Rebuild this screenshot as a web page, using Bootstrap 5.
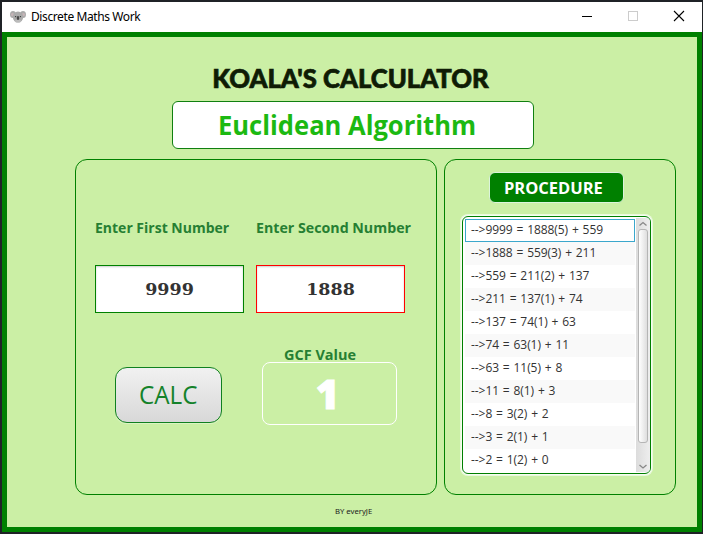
<!DOCTYPE html>
<html lang="en">
<head>
<meta charset="utf-8">
<title>Discrete Maths Work</title>
<link rel="stylesheet" href="https://cdn.jsdelivr.net/npm/bootstrap@5.3.0/dist/css/bootstrap.min.css">
<style>
html,body{height:100%}
body{background:#1f2226;font-family:"Open Sans","Noto Sans",sans-serif;padding:2px 1px 2px 2px;overflow:hidden;line-height:1}
.window{height:530px;width:700px}
.titlebar{height:30px;background:#fff;color:#000;font-size:12px;padding-left:8px}
.titlebar .caption{font-family:"Noto Sans",sans-serif;letter-spacing:-.4px;margin-left:5px}
.win-btn{width:46px;height:30px;padding:0}
.app{height:500px;background:#cbefa5;border:5px solid #008000}
.app-title{height:64px;padding-top:25px;font:900 27px/32px Lato,sans-serif;color:#0f1c05}
.fit{display:inline-block;white-space:nowrap;transform-origin:0 50%}
.app-title .fit{transform:scaleX(.95);transform-origin:50% 50%;-webkit-text-stroke:.7px #0f1c05;margin-left:-2px}
.banner{width:362px;height:48px;margin-left:165px;padding-left:45px;background:#fff;border:1px solid #108010;border-radius:6px;font-size:26px;font-weight:700;color:#1cb912}
.banner .fit{transform:scaleX(.983)}
.panels{margin:10px 0 0 68px;gap:7px}
.panel{height:336px;border:1px solid #008000;border-radius:12px}
.panel-form{width:362px;padding:57px 0 0 19px}
.panel-steps{width:232px;padding:12px 0 0 16px}
.fields{gap:12px}
.field{width:149px}
.field label{height:22px;line-height:20px;font-size:15px;font-weight:700;color:#267f33;white-space:nowrap;transform:scaleX(.933);transform-origin:0 50%}
.field label.wide{transform:scaleX(.947)}
.field .num{height:48px;margin-top:26px;padding:0;border:1px solid #008000;border-radius:0;color:#333;box-shadow:inset 0 1px 2px #ccc;font:700 17.5px "DejaVu Serif",serif;text-align:center}
.field .num.invalid{border-color:#f00}
.result-row{margin:31px 0 0 20px;gap:40px}
.calc{width:107px;height:56px;margin-top:23px;border:1px solid #108020;border-radius:12px;background:linear-gradient(#f1f1f1,#d8d8d8);box-shadow:0 1px 0 #dcf4c4;color:#14822a;font-size:25px;padding:0}
.calc .fit{transform:scaleX(.97);transform-origin:50% 50%}
.gcf label{height:18px;padding-left:22px;line-height:20px;font-size:15px;font-weight:700;color:#267f33;display:block}
.gcf label .fit{transform:scaleX(.965)}
.gcf-box{width:135px;height:63px;border:1px solid #fff;border-radius:8px;color:#fff;font:700 40px/1 "Liberation Sans",sans-serif}
.gcf-box .one{font-family:"Open Sans",sans-serif;font-weight:800;-webkit-text-stroke:1px #fff;margin-left:-4px}
.proc{width:135px;height:31px;margin-left:28px;background:#008000;border:1px solid #dcf4dc;border-radius:6px;color:#fff;font-size:16px;font-weight:700;padding-left:14px}
.proc .fit{transform:scaleX(1.03)}
.steps{width:191px;height:260px;margin-top:12px;background:#fff;border:1px solid #f6fdf0;border-radius:7px;box-shadow:0 0 0 1px #e9f9dc}
.steps-in{height:258px;border:1px solid #008000;border-radius:6px;padding:2px;overflow:hidden}
.rows{width:170px}
.rows .list-group-item{height:23px;flex:none;border:0;border-radius:0;padding:0 0 0 6px;line-height:21px;font-size:12px;color:#333;white-space:nowrap;background:#fff;letter-spacing:-.06px;word-spacing:.8px}
.rows .list-group-item:nth-child(even){background:#f9f9f9}
.rows .list-group-item.focus-row{border:1px solid #3ba7cc;padding-left:5px;line-height:19px}
.scroll{width:14px;margin:-1px -1px -1px 1px;background:linear-gradient(90deg,#dcdcdc,#eee)}
.thumb{width:10px;height:214px;border:1px solid #b5b5b5;border-radius:3px;background:linear-gradient(90deg,#fff,#dedede)}
.footer-text{font-size:7.7px;color:#222;margin:13px 0 0 328px;font-family:"Noto Sans",sans-serif}
</style>
<script src="https://cdn.jsdelivr.net/npm/bootstrap@5.3.0/dist/js/bootstrap.bundle.min.js"></script>
</head>
<body>
<div class="window">
  <header class="titlebar d-flex align-items-center">
    <svg width="16" height="16" viewBox="0 0 16 16"><ellipse cx="3" cy="5.5" rx="3" ry="3.6" fill="#aaa"/><ellipse cx="13" cy="5.5" rx="3" ry="3.6" fill="#aaa"/><circle cx="2.6" cy="5.5" r="1.6" fill="#c7b5b8"/><circle cx="13.4" cy="5.5" r="1.6" fill="#c7b5b8"/><ellipse cx="8" cy="8" rx="5.2" ry="5.6" fill="#aaa"/><ellipse cx="8" cy="12" rx="3" ry="1.5" fill="#bbb"/><circle cx="5.6" cy="7.6" r=".7" fill="#333"/><circle cx="10.4" cy="7.6" r=".7" fill="#333"/><ellipse cx="8" cy="9" rx="1.3" ry="2.1" fill="#484848"/></svg>
    <span class="caption">Discrete Maths Work</span>
    <div class="d-flex ms-auto">
      <span class="win-btn"><svg width="46" height="30"><path d="M18 14.5h10" stroke="#000"/></svg></span>
      <span class="win-btn"><svg width="46" height="30"><rect x="18.5" y="9.5" width="9" height="9" fill="none" stroke="#ccc"/></svg></span>
      <span class="win-btn"><svg width="46" height="30"><path d="M18 9l10 10M28 9l-10 10" stroke="#000" stroke-width="1.1"/></svg></span>
    </div>
  </header>
  <main class="app">
    <h1 class="app-title text-center m-0"><span class="fit">KOALA'S CALCULATOR</span></h1>
    <div class="banner d-flex align-items-center"><span class="fit">Euclidean Algorithm</span></div>
    <div class="panels d-flex">
      <section class="panel panel-form">
        <div class="fields d-flex">
          <div class="field"><label for="n1">Enter First Number</label><input id="n1" class="num form-control" value="9999"></div>
          <div class="field"><label for="n2" class="wide">Enter Second Number</label><input id="n2" class="num invalid form-control" value="1888"></div>
        </div>
        <div class="result-row d-flex">
          <button class="calc btn" type="button"><span class="fit">CALC</span></button>
          <div class="gcf"><label><span class="fit">GCF Value</span></label><div class="gcf-box d-flex align-items-center justify-content-center"><span class="one">1</span></div></div>
        </div>
      </section>
      <section class="panel panel-steps">
        <div class="proc d-flex align-items-center"><span class="fit">PROCEDURE</span></div>
        <div class="steps"><div class="steps-in d-flex">
          <ul class="rows list-group flex-shrink-0">
            <li class="list-group-item focus-row">--&gt;9999 = 1888(5) + 559</li>
            <li class="list-group-item">--&gt;1888 = 559(3) + 211</li>
            <li class="list-group-item">--&gt;559 = 211(2) + 137</li>
            <li class="list-group-item">--&gt;211 = 137(1) + 74</li>
            <li class="list-group-item">--&gt;137 = 74(1) + 63</li>
            <li class="list-group-item">--&gt;74 = 63(1) + 11</li>
            <li class="list-group-item">--&gt;63 = 11(5) + 8</li>
            <li class="list-group-item">--&gt;11 = 8(1) + 3</li>
            <li class="list-group-item">--&gt;8 = 3(2) + 2</li>
            <li class="list-group-item">--&gt;3 = 2(1) + 1</li>
            <li class="list-group-item">--&gt;2 = 1(2) + 0</li>
          </ul>
          <div class="scroll d-flex flex-column align-items-center justify-content-between flex-shrink-0">
            <svg width="10" height="11"><path d="M1.5 7.5l3.5-3 3.5 3" fill="none" stroke="#888" stroke-width="1.3"/></svg>
            <div class="thumb flex-shrink-0"></div>
            <div class="flex-grow-1"></div>
            <svg width="10" height="11"><path d="M1.5 4l3.5 3 3.5-3" fill="none" stroke="#888" stroke-width="1.3"/></svg>
          </div>
        </div></div>
      </section>
    </div>
    <div class="footer-text">BY everyJE</div>
  </main>
</div>
</body>
</html>
